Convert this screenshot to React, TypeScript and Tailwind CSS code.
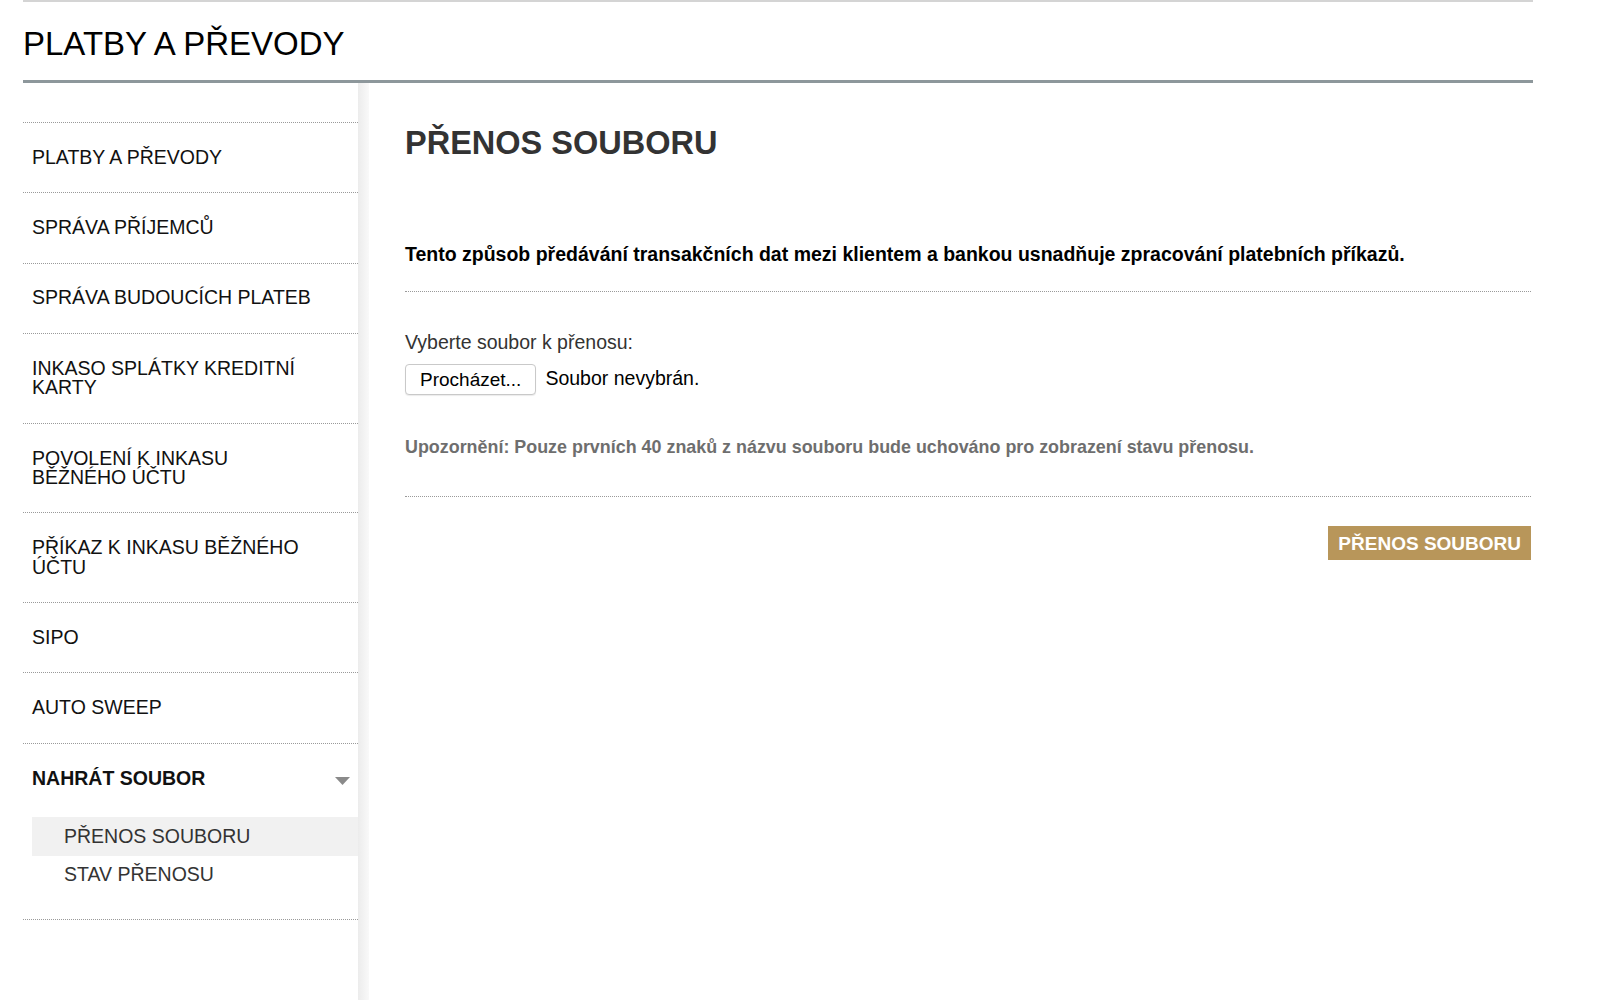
import React from 'react';

const menu: { label: React.ReactNode }[] = [
  { label: 'PLATBY A PŘEVODY' },
  { label: 'SPRÁVA PŘÍJEMCŮ' },
  { label: 'SPRÁVA BUDOUCÍCH PLATEB' },
  { label: <>INKASO SPLÁTKY KREDITNÍ<br />KARTY</> },
  { label: <>POVOLENÍ K INKASU<br />BĚŽNÉHO ÚČTU</> },
  { label: <>PŘÍKAZ K INKASU BĚŽNÉHO<br />ÚČTU</> },
  { label: 'SIPO' },
  { label: 'AUTO SWEEP' },
];

export default function App() {
  return (
    <div className="min-h-screen bg-white font-['Liberation_Sans',Arial,sans-serif] text-black">
      <div className="ml-[23px] w-[1510px] min-h-screen flex flex-col">
        {/* page header */}
        <header className="border-t-[2px] border-[#d4d4d4] pt-[25px] pb-[20px] border-b-[3px] border-b-[#8d979b]">
          <h1 className="text-[33px] leading-none font-normal">PLATBY A PŘEVODY</h1>
        </header>

        <div className="flex flex-1">
          {/* left nav */}
          <nav className="w-[335px] pt-[39px]">
            <ul className="border-t border-dotted border-[#9a9a9a]">
              {menu.map((m, i) => (
                <li key={i} className="border-b border-dotted border-[#9a9a9a] py-[24.9px] pl-[9px] text-[19.5px] leading-[19.5px] text-[#111]">
                  {m.label}
                </li>
              ))}
              <li className="border-b border-dotted border-[#9a9a9a] pt-[25px] pb-[25px]">
                <div className="flex items-center justify-between pl-[9px] pr-[8px]">
                  <span className="text-[19.5px] leading-[19.5px] font-bold text-[#111]">NAHRÁT SOUBOR</span>
                  <svg width="15" height="8" viewBox="0 0 15 8" className="mt-[4px]">
                    <path d="M0 0H15L7.5 8Z" fill="#8a8a8a" />
                  </svg>
                </div>
                <ul className="mt-[29px] ml-[9px]">
                  <li className="h-[38.5px] flex items-center pl-[32px] bg-[#f1f1f1] text-[19.5px] leading-[19.5px] text-[#333]">PŘENOS SOUBORU</li>
                  <li className="h-[38.5px] flex items-center pl-[32px] text-[19.5px] leading-[19.5px] text-[#333]">STAV PŘENOSU</li>
                </ul>
              </li>
            </ul>
          </nav>
          <div className="w-[11px] bg-gradient-to-r from-[#ececec] to-[#f9f9f9]" />

          {/* main content */}
          <main className="flex-1 pl-[36px] pr-[2px] pt-[44px]">
            <h2 className="text-[32.5px] leading-none font-bold text-[#333]">PŘENOS SOUBORU</h2>
            <div className="mt-[85px] pb-[27px] border-b border-dotted border-[#9a9a9a]">
              <p className="text-[19.5px] leading-[19.5px] font-bold">
                Tento způsob předávání transakčních dat mezi klientem a bankou usnadňuje zpracování platebních příkazů.
              </p>
            </div>
            <div className="pt-[41px] pb-[40px] border-b border-dotted border-[#9a9a9a]">
              <label className="block text-[19.5px] leading-none text-[#333]">Vyberte soubor k přenosu:</label>
              <div className="mt-[11px] flex items-center gap-[9px]">
                <button
                  type="button"
                  className="h-[31px] px-[14px] rounded-[4px] border border-[#c9c9c9] bg-white text-[19px] leading-none shadow-[0_1px_1px_rgba(0,0,0,0.08)]"
                >
                  Procházet...
                </button>
                <span className="text-[19.5px] leading-none">Soubor nevybrán.</span>
              </div>
              <p className="mt-[44px] text-[17.9px] leading-none font-bold text-[#6e6e6e]">
                Upozornění: Pouze prvních 40 znaků z názvu souboru bude uchováno pro zobrazení stavu přenosu.
              </p>
            </div>
            <div className="flex justify-end pt-[29px]">
              <button
                type="button"
                className="h-[34px] px-[10px] bg-[#b8965a] text-white text-[19px] leading-none font-bold"
              >
                PŘENOS SOUBORU
              </button>
            </div>
          </main>
        </div>
      </div>
    </div>
  );
}
